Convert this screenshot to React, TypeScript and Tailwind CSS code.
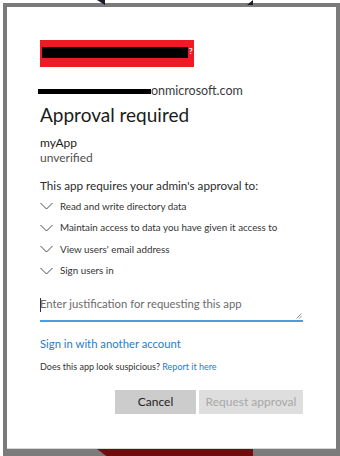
import { useState } from 'react';

const permissions = [
  'Read and write directory data',
  'Maintain access to data you have given it access to',
  "View users' email address",
  'Sign users in',
];

function Chevron() {
  return (
    <svg width="13" height="8" viewBox="0 0 13 8" className="shrink-0">
      <path d="M0.5 1 L6.5 7 L12.5 1" fill="none" stroke="#4a4a4a" strokeWidth="1" />
    </svg>
  );
}

export default function App() {
  const [justification, setJustification] = useState('');

  return (
    <div
      className="relative w-[340px] h-[456px] overflow-hidden bg-white"
      style={{ fontFamily: 'Lato, "Open Sans", Arial, sans-serif' }}
    >
      {/* window frame */}
      <div className="absolute left-[3px] top-[3px] w-[337px] h-[460px] border-[4px] border-[#7b7b7b] bg-[#7b7b7b]">
        <div className="w-full h-[442px] bg-white border-b border-[#d8d8d8]">
          <div className="pl-[33px] pr-[33px] pt-[33px] text-[#1b1b1b]">
            {/* tenant logo (redacted) */}
            <div className="flex items-start w-[154px] h-[27px] bg-[#ed1c24] pl-[2px] pt-[7px]">
              <div className="w-[146px] h-[11px] bg-black" />
              <span className="text-[8px] leading-[8px] text-white font-bold ml-px">?</span>
            </div>

            {/* account */}
            <div className="flex items-center mt-[16px] h-[16px]">
              <div className="w-[113px] h-[5px] bg-black -ml-[2px]" />
              <span className="text-[12.5px] text-[#3a3a3a] leading-[16px]">onmicrosoft.com</span>
            </div>

            <h1 className="mt-[3px] text-[19px] leading-[26px] text-[#1b1b1b]">Approval required</h1>

            <div className="mt-[7px] text-[12px] leading-[15px]">
              <div className="text-[#1b1b1b]">myApp</div>
              <div className="text-[#505050]">unverified</div>
            </div>

            <p className="mt-[12px] text-[11.7px] leading-[16px] text-[#2b2b2b]">
              This app requires your admin's approval to:
            </p>

            <ul className="mt-[5px] flex flex-col gap-[5px]">
              {permissions.map((p) => (
                <li key={p} className="flex items-center gap-[7px] h-[16.5px] text-[9.8px] text-[#333] whitespace-nowrap">
                  <Chevron />
                  <span>{p}</span>
                </li>
              ))}
            </ul>

            <div className="relative mt-[13px]">
              <textarea
                value={justification}
                onChange={(e) => setJustification(e.target.value)}
                placeholder="Enter justification for requesting this app"
                className="block w-full h-[30px] resize-none border-0 border-b-[2px] border-[#4a9ee0] outline-none pt-[4px] text-[11.3px] leading-[16px] text-[#1b1b1b] placeholder:text-[#6b6b6b] caret-black"
              />
              <div className="absolute left-0 top-[6px] w-px h-[14px] bg-[#333]" />
              <svg width="6" height="6" viewBox="0 0 6 6" className="absolute right-[1px] bottom-[3px]">
                <path d="M5.5 0.5 L0.5 5.5 M5.5 3 L3 5.5" stroke="#777" strokeWidth="0.8" />
              </svg>
            </div>

            <a href="#" className="block mt-[14px] text-[11.3px] leading-[16px] text-[#2a7cc9]">
              Sign in with another account
            </a>

            <p className="mt-[9px] text-[9px] leading-[12px] text-[#333]">
              Does this app look suspicious? <a href="#" className="text-[#2a7cc9]">Report it here</a>
            </p>

            <div className="flex justify-end gap-[3px] mt-[17px]">
              <button className="w-[81px] h-[24px] bg-[#cccccc] text-[12px] text-[#222]">Cancel</button>
              <button disabled className="w-[104px] h-[24px] bg-[#dedede] text-[12px] text-[#a8a8a8]">
                Request approval
              </button>
            </div>
          </div>
        </div>
      </div>

      {/* shapes of the page behind the window */}
      <div className="absolute left-[97px] top-0 w-[8px] h-[5px] bg-[#1a1a2a] [clip-path:polygon(0_0,100%_0,100%_100%)]" />
      <div className="absolute left-[247px] top-0 w-[6px] h-[5px] bg-[#1a1a2a] [clip-path:polygon(100%_0,100%_100%,0_100%)]" />
      <div className="absolute left-[97px] top-[449px] w-[156px] h-[7px] bg-[#6e0d0d] [clip-path:polygon(0_0,100%_0,100%_100%,6%_100%)]" />
    </div>
  );
}
